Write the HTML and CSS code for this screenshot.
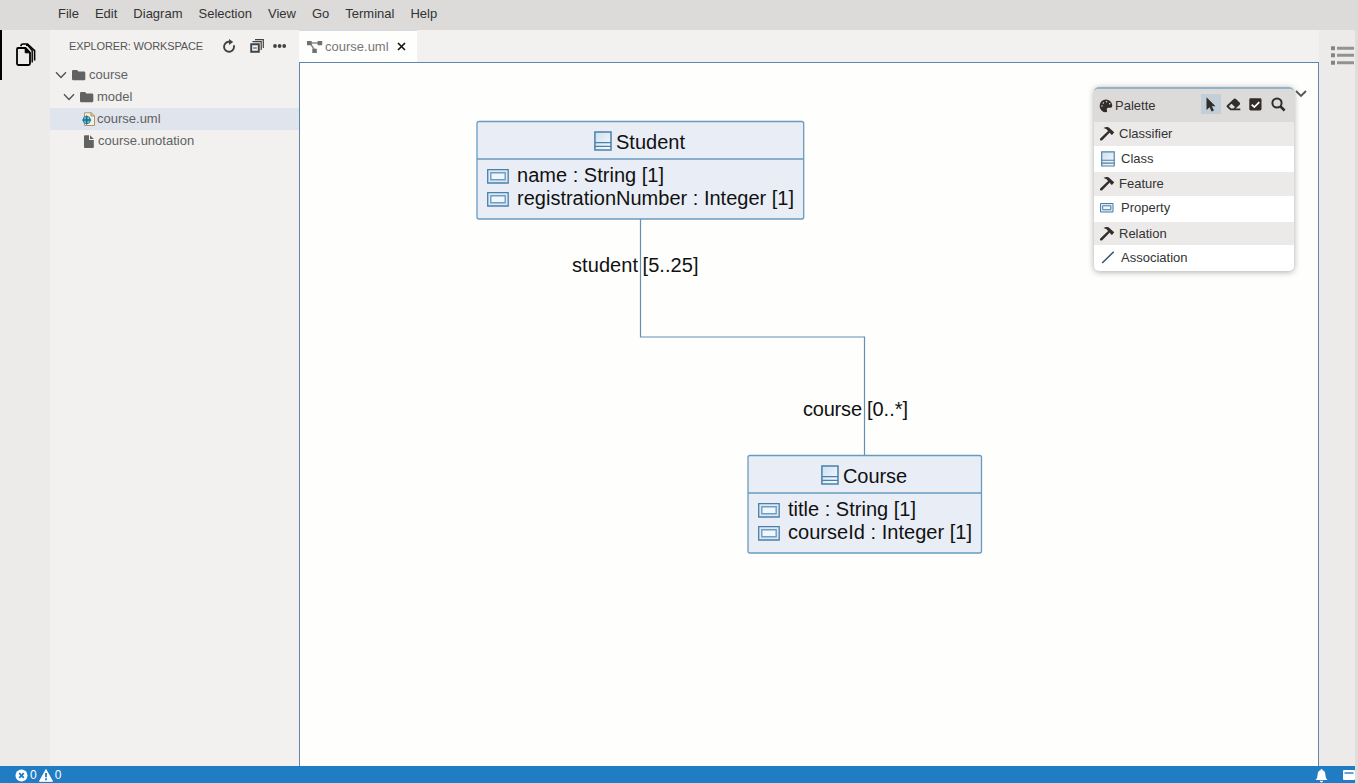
FILE: index.html
```html
<!DOCTYPE html>
<html lang="en">
<head>
<meta charset="utf-8">
<title>course.uml</title>
<link rel="stylesheet" href="styles.css">
</head>
<body>
<svg class="defs" width="0" height="0">
  <defs>
    <linearGradient id="fade" x1="0" y1="0" x2="1" y2="1"><stop offset="0" stop-color="#ccdfee"/><stop offset="1" stop-color="#f8fcff"/></linearGradient>
    <symbol id="hammer" viewBox="0 0 16 16"><path d="M4.5 2.1Q7 .3 9.5 1.2L13.2 4.6L14 5.3L15.2 6.3L13 9L11.6 8L10.8 6.6L3.2 14.2Q2 15 1.1 13.9Q.5 13 1.5 12.2L9.1 5L7.2 2.9Z" fill="#302d2b"/></symbol>
    <symbol id="chevron" viewBox="0 0 12 8"><path d="M1 1.3L6 6.5L11 1.3" fill="none" stroke="#505050" stroke-width="1.3"/></symbol>
    <symbol id="folder" viewBox="0 0 14 11"><path d="M0 1.2Q0 0 1.2 0H5L6.5 1.5H12Q13.3 1.5 13.3 2.8V9Q13.3 10.3 12 10.3H1.2Q0 10.3 0 9Z" fill="#626262"/></symbol>
    <symbol id="class" viewBox="0 0 18 20"><path d="M.9.9H17V19H.9Z" fill="url(#fade)" stroke="#4b80aa" stroke-width="1.5"/><path d="M1 11.7H17M1 15.3H17" stroke="#4b80aa" stroke-width="1.3"/></symbol>
    <symbol id="property" viewBox="0 0 22 15"><path d="M.7.7H21.2V14H.7Z" fill="#dce9f4" stroke="#4b80aa" stroke-width="1.3"/><path d="M3.8 3.8H18.2V10.8H3.8Z" fill="#eff6fc" stroke="#6f9ec3" stroke-width="1.4"/></symbol>
  </defs>
</svg>
<div class="app">
  <nav class="menu"><span>File</span><span>Edit</span><span>Diagram</span><span>Selection</span><span>View</span><span>Go</span><span>Terminal</span><span>Help</span></nav>
  <div class="workbench">
    <aside class="activity"><div class="activity-item">
      <svg width="22" height="25" viewBox="0 0 22 25" fill="none" stroke="#000"><path d="M3 6H10.5L15 10.5V21.5Q15 23 13.5 23H3.3Q2 23 2 21.5V7.3Q2 6 3 6Z" stroke-width="1.8"/><path d="M10.2 6V10.8H15Z" fill="#000"/><path d="M6 4.2Q6 2 8 2H12.5L19.6 8.6V18.5" stroke-width="1.6"/><path d="M11 3.2H12.8L17.2 8.5V20.5" stroke-width="1.4"/></svg>
    </div></aside>
    <aside class="explorer">
      <header class="explorer-head"><h1>EXPLORER: WORKSPACE</h1>
        <div class="explorer-tools">
          <svg width="14" height="14" viewBox="0 0 14 14"><path d="M7.8 2.8A5 5 0 1 0 11.8 6.3" fill="none" stroke="#424242" stroke-width="1.9"/><path d="M7 0L11.2 3L7 6Z" fill="#424242"/></svg>
          <svg width="14" height="14" viewBox="0 0 14 14" fill="none" stroke="#424242"><path d="M1.2 5.2H8.8V12.8H1.2Z" stroke-width="1.9"/><path d="M3 3V2.6H11.2V11M5 .7H13.3V9" stroke-width="1.2"/><path d="M3.2 9H6.8" stroke="#00539c"/></svg>
          <svg width="14" height="4" viewBox="0 0 14 4" fill="#424242"><circle cx="2" cy="2" r="1.9"/><circle cx="6.6" cy="2" r="1.9"/><circle cx="11.2" cy="2" r="1.9"/></svg>
        </div>
      </header>
      <div class="row row-course"><svg width="12" height="8"><use href="#chevron"/></svg><svg width="14" height="11"><use href="#folder"/></svg><span>course</span></div>
      <div class="row row-model"><svg width="12" height="8"><use href="#chevron"/></svg><svg width="14" height="11"><use href="#folder"/></svg><span>model</span></div>
      <div class="row row-uml"><svg width="14" height="15" viewBox="0 0 14 15"><path d="M2.5.8H9.5L12.5 4V13.5H2.5Z" fill="#f3f1e6" stroke="#ad946b"/><path d="M9 .8V4H12.5" fill="#dbc18f" stroke="#ad946b"/><circle cx="4.7" cy="8" r="3.7" fill="#3fa3c4" stroke="#17708f" stroke-width=".8"/><path d="M.3 8H9.2M4.7 3.4V12.6" stroke="#17607c"/><path d="M2.5 6H3.7M5.7 6H7M2.5 10H3.7M5.7 10H7" stroke="#b5e4f2"/></svg><span>course.uml</span></div>
      <div class="row row-notation"><svg width="10" height="13" viewBox="0 0 10 13"><path d="M0 1Q0 .2 1 .2H5V5H9.8V12Q9.8 12.9 9 12.9H1Q0 12.9 0 12Z" fill="#626262"/><path d="M6 .2L9.8 4H6Z" fill="#626262"/></svg><span>course.unotation</span></div>
    </aside>
    <main class="editor">
      <div class="tabs"><div class="tab"><svg width="16" height="14" viewBox="0 0 16 14"><path d="M2 3H13M3 3L7.5 10" stroke="#8a8a8a" stroke-width="1.4"/><path d="M0 1H4.7V5.2H0ZM10.6 1H15.2V5.2H10.6ZM5.3 8.7H9.8V13H5.3Z" fill="#707070"/></svg><span>course.uml</span><svg class="close" width="9" height="9" viewBox="0 0 9 9"><path d="M1 1L8 8M8 1L1 8" stroke="#111" stroke-width="1.6"/></svg></div></div>
      <div class="canvas">
        <svg class="diagram" width="1018" height="703" viewBox="300 63 1018 703">
          <path d="M640.5 219V337H864.5V455" fill="none" stroke="#6390b7" stroke-width="1.2"/>
          <g fill="#e9eef6" stroke="#6a9abf" stroke-width="1.3"><rect x="477" y="121.5" width="326.7" height="97.5" rx="2"/><rect x="748" y="455.5" width="233.5" height="97.5" rx="2"/><path d="M477 159H803.7M748 493H981.5"/></g>
          <use href="#class" x="594" y="131" width="18" height="20"/><use href="#class" x="821" y="465" width="18" height="20"/>
          <use href="#property" x="487" y="169" width="22" height="15"/><use href="#property" x="487" y="192" width="22" height="15"/>
          <use href="#property" x="758" y="503" width="22" height="15"/><use href="#property" x="758" y="526" width="22" height="15"/>
          <g class="label">
            <text x="616" y="149" textLength="69">Student</text>
            <text x="517" y="182" textLength="147">name : String [1]</text>
            <text x="517" y="205" textLength="277">registrationNumber : Integer [1]</text>
            <text x="572" y="272" textLength="66">student</text><text x="642.5" y="272" textLength="56">[5..25]</text>
            <text x="803" y="416" textLength="59">course</text><text x="867" y="416" textLength="41">[0..*]</text>
            <text x="843" y="483" textLength="64">Course</text>
            <text x="788" y="516" textLength="128">title : String [1]</text>
            <text x="788" y="539" textLength="184">courseId : Integer [1]</text>
          </g>
        </svg>
        <section class="palette">
          <header class="palette-head">
            <svg width="14" height="14" viewBox="0 0 14 14"><path fill-rule="evenodd" d="M7 .5A6.3 6.3 0 1 0 7 13.3Q8.7 13.1 8 11.2Q7.2 9 9.3 8.7H11.5Q13.4 8.5 13.3 6.4A6.3 6.3 0 0 0 7 .5ZM3 6.2A.8.8 0 1 1 3 7.8A.8.8 0 1 1 3 6.2ZM4.3 3.2A.8.8 0 1 1 4.3 4.8A.8.8 0 1 1 4.3 3.2ZM7.5 2A.8.8 0 1 1 7.5 3.6A.8.8 0 1 1 7.5 2ZM10.7 4A.8.8 0 1 1 10.7 5.6A.8.8 0 1 1 10.7 4Z" fill="#302d2b"/></svg>
            <span>Palette</span>
            <div class="tools">
              <div class="tool active"><svg width="10" height="15" viewBox="0 0 10 15"><path d="M.5.3L9.5 9.2H5.8L8 13.5L5.6 14.6L3.6 10.3L.5 13Z" fill="#302d2b"/></svg></div>
              <div class="tool"><svg width="15" height="13" viewBox="0 0 15 13"><path fill-rule="evenodd" d="M1 7.3L8 .8Q9 0 10 .9L13.8 4.8Q14.6 5.7 13.7 6.7L9.6 10.5H14.3V12.3H4.4L1 9.2Q0 8.2 1 7.3ZM5.5 5.8L2.9 8.3L5 10.4H7.3L9 8.9Z" fill="#302d2b"/></svg></div>
              <div class="tool"><svg width="13" height="13" viewBox="0 0 13 13"><rect x=".3" y=".3" width="12.2" height="12.2" rx="1.4" fill="#302d2b"/><path d="M2.7 6.6L5.3 9.1L10.3 4.1" fill="none" stroke="#fff" stroke-width="1.8"/></svg></div>
              <div class="tool"><svg width="15" height="15" viewBox="0 0 15 15" fill="none" stroke="#302d2b"><circle cx="6" cy="6" r="4.6" stroke-width="2"/><path d="M9.5 9.5L13.6 13.5" stroke-width="2.5"/></svg></div>
            </div>
          </header>
          <div class="group"><svg width="16" height="16"><use href="#hammer"/></svg>Classifier</div>
          <div class="item item-class"><svg width="14" height="16"><use href="#class"/></svg>Class</div>
          <div class="group"><svg width="16" height="16"><use href="#hammer"/></svg>Feature</div>
          <div class="item item-property"><svg width="14" height="10" viewBox="0 0 14 10"><path d="M.5.5H13V9H.5Z" fill="#dce9f4" stroke="#4b7ca4"/><path d="M2.7 2.8H10.8V6.7H2.7Z" fill="#eff6fc" stroke="#4b7ca4"/></svg>Property</div>
          <div class="group group-relation"><svg width="16" height="16"><use href="#hammer"/></svg>Relation</div>
          <div class="item item-association"><svg width="14" height="13" viewBox="0 0 14 13"><path d="M1.2 12L12.7.8" stroke="#315370" stroke-width="1.5"/></svg>Association</div>
        </section>
        <svg class="collapse" width="12" height="8" viewBox="0 0 12 8"><path d="M1 1L6 6L11 1" fill="none" stroke="#555" stroke-width="1.8"/></svg>
      </div>
    </main>
    <aside class="outline"><svg width="23" height="19" viewBox="0 0 23 19"><path d="M0 .3H4V4.3H0ZM0 7.3H4V11.3H0ZM0 14.8H4V18.8H0Z" fill="#858585"/><path d="M6 2.3H23M6 9.3H23M6 16.8H23" stroke="#929292" stroke-width="3"/></svg></aside>
  </div>
  <footer class="status">
    <div class="problems"><svg width="13" height="13" viewBox="0 0 13 13"><circle cx="6.5" cy="6.5" r="6" fill="#fff"/><path d="M4.2 4.2L8.8 8.8M8.8 4.2L4.2 8.8" stroke="#217dc3" stroke-width="1.9"/></svg><span>0</span><svg width="14" height="13" viewBox="0 0 14 13"><path d="M7 .6L13.5 12.3H.5Z" fill="#fff" stroke="#fff" stroke-linejoin="round"/><path d="M7 4V8.3M7 9.3V11.2" stroke="#217dc3" stroke-width="1.8"/></svg><span>0</span></div>
    <div class="notices"><svg width="13" height="14" viewBox="0 0 13 14"><path d="M6.5 0Q7.5 0 7.5 1.3Q10.4 2 10.4 6Q10.4 9 12.5 11H.5Q2.6 9 2.6 6Q2.6 2 5.5 1.3Q5.5 0 6.5 0ZM4.8 11.8H8.2Q8 13.5 6.5 13.5Q5 13.5 4.8 11.8Z" fill="#fff"/></svg><svg class="panel-icon" width="12" height="10" viewBox="0 0 12 10"><rect width="12" height="10" rx="1" fill="#fff"/><path d="M1.5 3H10.5" stroke="#217dc3" stroke-width="1.4"/></svg></div>
  </footer>
  <div class="window-edge"></div>
</div>
</body>
</html>
```
FILE: styles.css
```css
* { box-sizing: border-box; }
body { margin: 0; font: 13px/22px "Liberation Sans", Arial, sans-serif; color: #616161; overflow: hidden; }
svg { display: block; flex: none; }
.defs { position: absolute; }
.app { position: relative; width: 1358px; height: 783px; display: flex; flex-direction: column; background: #f2f1f0; }
.menu { height: 30px; flex: none; display: flex; padding: 3px 0 0 50px; background: #dcdbda; color: #333; }
.menu span { padding: 0 8px; }
.workbench { height: 736px; flex: none; display: flex; }
.activity { width: 50px; background: #ecebea; }
.activity-item { height: 50px; border-left: 2px solid #000; padding: 12px 0 0 13px; }
.explorer { width: 249px; background: #f2f1f0; }
.explorer-head { height: 34px; display: flex; align-items: center; padding: 0 0 2px 19px; }
.explorer h1 { width: 134px; margin: 0; font-size: 11px; line-height: 18px; letter-spacing: -.14px; font-weight: 400; white-space: nowrap; color: #555; }
.explorer-tools { display: flex; align-items: center; gap: 9px; margin-left: 19px; }
.explorer-tools svg:nth-child(2) { margin-left: 5px; }
.row { height: 22px; display: flex; align-items: center; gap: 5px; padding-left: 5px; }
.row span { padding-bottom: 1px; }
.row-course, .row-model { gap: 3px; }
.row-course svg + svg, .row-model svg + svg { margin-left: 2px; }
.row-model { padding-left: 13px; }
.row-uml { padding-left: 32px; gap: 1px; background: #e0e4ed; }
.row-notation { padding-left: 34px; gap: 4px; }
.editor { width: 1020px; }
.tabs { height: 32px; background: #f2f1f0; }
.tab { width: 118px; height: 32px; display: flex; align-items: center; padding: 0 0 0 8px; background: #fefefd; border-top: 1px solid #d2d9e0; color: #777; }
.tab span { margin-left: 2px; }
.close { margin-left: 8px; }
.canvas { position: relative; height: 704px; border: 1px solid #6087a9; border-bottom: 0; background: #fefefd; }
.label { font: 20px "Liberation Sans", Arial, sans-serif; fill: #111; }
.palette { position: absolute; left: 794px; top: 24px; width: 200px; height: 184px; border-top: 2px solid #92b2ca; border-radius: 5px; overflow: hidden; background: #fff; box-shadow: 0 1px 6px #aaa; color: #333; }
.palette-head { display: flex; height: 33px; padding-left: 5px; align-items: center; background: #dcdbda; }
.palette-head > span { margin-left: 2px; }
.tools { display: flex; margin: 0 6px 3px auto; gap: 2.4px; }
.tool { width: 20px; height: 20px; display: flex; align-items: center; justify-content: center; }
.active { background: #c2ced8; }
.group { height: 24px; display: flex; align-items: center; gap: 4px; padding: 0 5px 1px; background: #ebeae9; }
.item { height: 26px; display: flex; align-items: center; gap: 6px; padding: 0 7px 1px; }
.item-property { height: 26px; padding: 0 6px 2px; gap: 7px; }
.group-relation { height: 23px; padding-bottom: 0; }
.item-association { height: 26px; }
.collapse { position: absolute; left: 995px; top: 27px; }
.outline { width: 39px; padding: 16px 0 0 12px; background: #ecebea; }
.status { height: 17px; flex: none; display: flex; justify-content: space-between; padding: 3px 3px 0 15px; overflow: hidden; background: #217dc3; color: #fff; font-size: 12px; line-height: 14px; }
.problems { display: flex; gap: 2px; }
.problems svg + span { line-height: 13px; }
.notices { display: flex; gap: 15px; }
.panel-icon { margin-top: 1px; }
.window-edge { position: absolute; top: 30px; right: 0; width: 3px; height: 753px; background: #dfdcda; }
```
